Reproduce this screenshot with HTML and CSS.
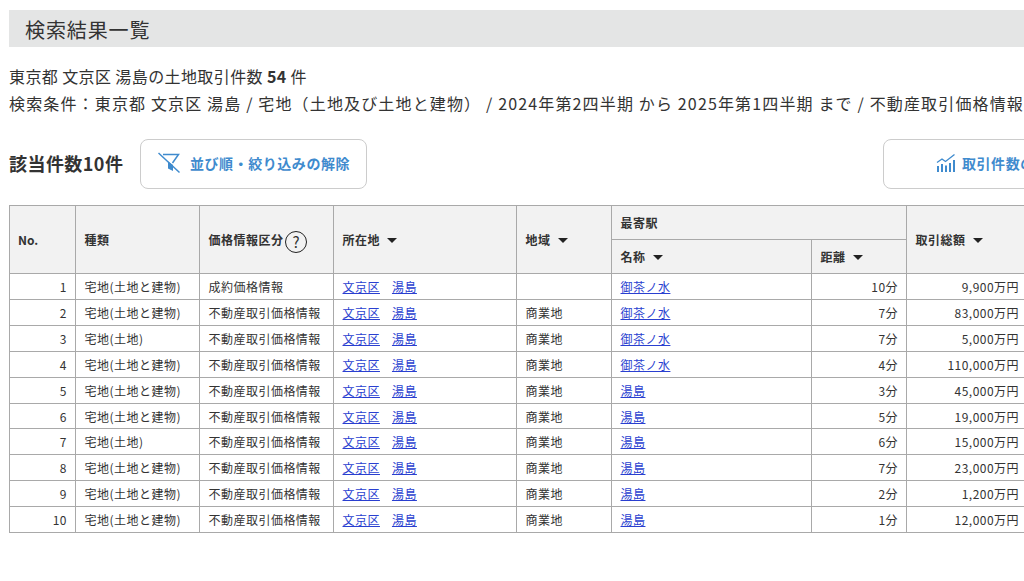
FILE: index.html
```html
<!DOCTYPE html>
<html lang="ja">
<head>
    <meta charset="UTF-8">
    <title>検索結果一覧</title>
    <link rel="stylesheet" href="styles.css">
</head>
<body>

<div class="container">
    <h2 class="page-title">検索結果一覧</h2>

    <div class="summary">
        <p>東京都 文京区 湯島の土地取引件数 <b>54</b> 件</p>
        <p class="condition">検索条件：東京都 文京区 湯島 / 宅地（土地及び土地と建物） / 2024年第2四半期 から 2025年第1四半期 まで / 不動産取引価格情報</p>
    </div>

    <div class="toolbar">
        <span class="count">該当件数10件</span>
        <a class="btn btn-clear" href="#">
            <svg width="24" height="24" viewBox="0 0 24 24" fill="none" stroke="#3f8bce" stroke-width="1.5">
                <path d="M5 3.500H20.500L14.500 12"/>
                <path d="M10 10.500L15 14V20L10 17.500Z" fill="#3f8bce" stroke="none"/>
                <path d="M0.500 2L21.500 21.500"/>
            </svg>
            並び順・絞り込みの解除
        </a>
        <a class="btn btn-chart" href="#">
            <svg width="20" height="20" viewBox="0 0 20 20" fill="none" stroke="#3f8bce" stroke-width="1.3">
                <path d="M1 9.500L6 6L9.500 8.500L18.500 1.500"/>
                <path d="M2 13V19M6 11V19M10 12.500V19M14 10V19M18 7V19" stroke-width="2"/>
            </svg>
            取引件数の推移を見る
        </a>
    </div>

    <table class="result-table">
        <colgroup>
            <col class="col-no">
            <col class="col-type">
            <col class="col-price">
            <col class="col-place">
            <col class="col-area">
            <col class="col-station">
            <col class="col-dist">
            <col class="col-total">
        </colgroup>
        <thead>
            <tr>
                <th class="head-no" rowspan="2">No.</th>
                <th rowspan="2">種類</th>
                <th rowspan="2">価格情報区分<span class="help">?</span></th>
                <th rowspan="2">所在地<i class="sort"></i></th>
                <th rowspan="2">地域<i class="sort"></i></th>
                <th colspan="2">最寄駅</th>
                <th rowspan="2">取引総額<i class="sort"></i></th>
            </tr>
            <tr>
                <th>名称<i class="sort"></i></th>
                <th>距離<i class="sort"></i></th>
            </tr>
        </thead>
        <tbody>
            <tr>
                <td class="num">1</td><td>宅地(土地と建物)</td><td>成約価格情報</td>
                <td><a href="#">文京区</a><a class="town" href="#">湯島</a></td><td></td>
                <td><a href="#">御茶ノ水</a></td><td class="num">10分</td><td class="num">9,900万円</td>
            </tr>
            <tr>
                <td class="num">2</td><td>宅地(土地と建物)</td><td>不動産取引価格情報</td>
                <td><a href="#">文京区</a><a class="town" href="#">湯島</a></td><td>商業地</td>
                <td><a href="#">御茶ノ水</a></td><td class="num">7分</td><td class="num">83,000万円</td>
            </tr>
            <tr>
                <td class="num">3</td><td>宅地(土地)</td><td>不動産取引価格情報</td>
                <td><a href="#">文京区</a><a class="town" href="#">湯島</a></td><td>商業地</td>
                <td><a href="#">御茶ノ水</a></td><td class="num">7分</td><td class="num">5,000万円</td>
            </tr>
            <tr>
                <td class="num">4</td><td>宅地(土地と建物)</td><td>不動産取引価格情報</td>
                <td><a href="#">文京区</a><a class="town" href="#">湯島</a></td><td>商業地</td>
                <td><a href="#">御茶ノ水</a></td><td class="num">4分</td><td class="num">110,000万円</td>
            </tr>
            <tr>
                <td class="num">5</td><td>宅地(土地と建物)</td><td>不動産取引価格情報</td>
                <td><a href="#">文京区</a><a class="town" href="#">湯島</a></td><td>商業地</td>
                <td><a href="#">湯島</a></td><td class="num">3分</td><td class="num">45,000万円</td>
            </tr>
            <tr>
                <td class="num">6</td><td>宅地(土地と建物)</td><td>不動産取引価格情報</td>
                <td><a href="#">文京区</a><a class="town" href="#">湯島</a></td><td>商業地</td>
                <td><a href="#">湯島</a></td><td class="num">5分</td><td class="num">19,000万円</td>
            </tr>
            <tr>
                <td class="num">7</td><td>宅地(土地)</td><td>不動産取引価格情報</td>
                <td><a href="#">文京区</a><a class="town" href="#">湯島</a></td><td>商業地</td>
                <td><a href="#">湯島</a></td><td class="num">6分</td><td class="num">15,000万円</td>
            </tr>
            <tr>
                <td class="num">8</td><td>宅地(土地と建物)</td><td>不動産取引価格情報</td>
                <td><a href="#">文京区</a><a class="town" href="#">湯島</a></td><td>商業地</td>
                <td><a href="#">湯島</a></td><td class="num">7分</td><td class="num">23,000万円</td>
            </tr>
            <tr>
                <td class="num">9</td><td>宅地(土地と建物)</td><td>不動産取引価格情報</td>
                <td><a href="#">文京区</a><a class="town" href="#">湯島</a></td><td>商業地</td>
                <td><a href="#">湯島</a></td><td class="num">2分</td><td class="num">1,200万円</td>
            </tr>
            <tr>
                <td class="num">10</td><td>宅地(土地と建物)</td><td>不動産取引価格情報</td>
                <td><a href="#">文京区</a><a class="town" href="#">湯島</a></td><td>商業地</td>
                <td><a href="#">湯島</a></td><td class="num">1分</td><td class="num">12,000万円</td>
            </tr>
        </tbody>
    </table>
</div>

</body>
</html>
```
FILE: styles.css
```css
html, body {
    height: 100%;
    overflow: hidden;
}
body {
    font-family: "Noto Sans CJK JP", "Noto Sans", sans-serif;
    color: #333;
    background-color: white;
    margin: 0;
    padding: 0;
}
.container {
    width: 1400px;
    padding: 10px 0 0 9px;
}
.page-title {
    margin: 0;
    height: 37px;
    line-height: 39px;
    padding-left: 16px;
    font-size: 20px;
    font-weight: normal;
    letter-spacing: 0.9px;
    background-color: #e4e5e5;
}
.summary {
    margin-top: 16px;
    font-size: 16px;
    line-height: 27px;
    letter-spacing: 0.4px;
}
.summary p {
    margin: 0;
}
.summary .condition {
    white-space: nowrap;
    letter-spacing: 1.15px;
}
.toolbar {
    display: flex;
    align-items: center;
    margin-top: 22px;
}
.count {
    width: 131px;
    padding-bottom: 2px;
    font-size: 18px;
    font-weight: bold;
    letter-spacing: 0.45px;
}
.btn {
    display: flex;
    align-items: center;
    box-sizing: border-box;
    height: 50px;
    padding-bottom: 2px;
    border: 1px solid #ccc;
    border-radius: 8px;
    color: #3f8bce;
    font-size: 14px;
    font-weight: bold;
    letter-spacing: 0.55px;
    text-decoration: none;
}
.btn-clear {
    width: 227px;
    padding-left: 17px;
    gap: 8px;
}
.btn-chart {
    width: 300px;
    margin-left: 516px;
    padding-left: 52px;
    gap: 6px;
}
.result-table {
    margin-top: 16px;
    width: 1018px;
    table-layout: fixed;
    border-collapse: collapse;
    font-size: 12px;
    letter-spacing: 0.48px;
}
.col-no { width: 66px; }
.col-type { width: 124px; }
.col-price { width: 134px; }
.col-place { width: 183px; }
.col-area { width: 95px; }
.col-station { width: 200px; }
.col-dist { width: 95px; }
.col-total { width: 121px; }
.result-table th, .result-table td {
    border: 1px solid #a9a9a9;
    padding: 0 8px 0 8.5px;
    text-align: left;
}
.result-table th {
    height: 33px;
    font-weight: bold;
    background-color: #f2f2f2;
}
.result-table .head-no {
    padding-left: 8px;
    letter-spacing: 0;
}
.result-table td {
    height: 22.9px;
    padding-top: 2px;
    line-height: 22.9px;
    white-space: nowrap;
}
.result-table .num {
    text-align: right;
}
.result-table a {
    color: #2a3fd0;
}
.result-table .town {
    margin-left: 12px;
}
.sort {
    display: inline-block;
    margin-left: 7.5px;
    vertical-align: 2px;
    border-left: 5px solid transparent;
    border-right: 5px solid transparent;
    border-top: 5px solid #222;
}
.help {
    display: inline-block;
    box-sizing: border-box;
    width: 22px;
    height: 22px;
    line-height: 19px;
    margin: -4px 0 -4px 2px;
    border: 1.5px solid #222;
    border-radius: 50%;
    text-align: center;
    font-size: 15px;
    font-weight: normal;
    vertical-align: -3px;
}
```
